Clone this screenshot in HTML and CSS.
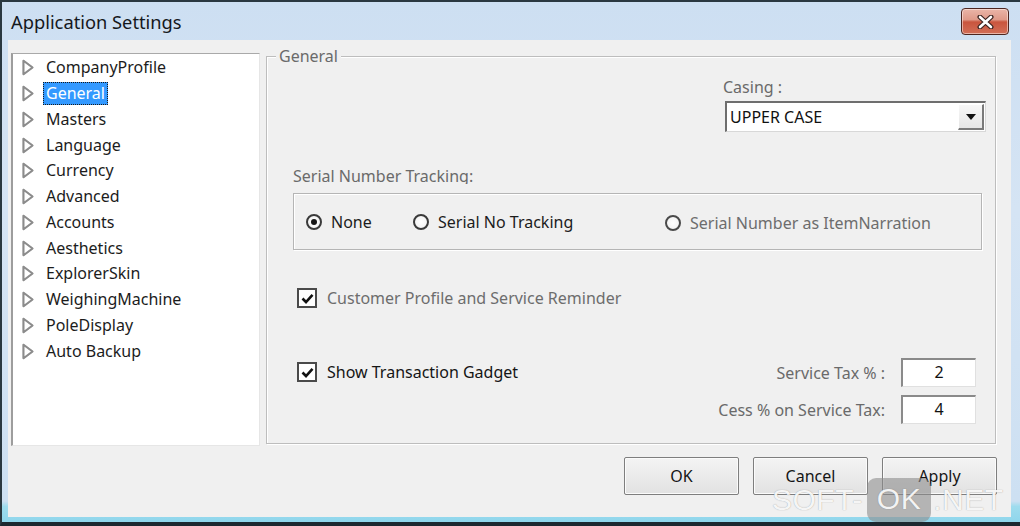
FILE: index.html
```html
<!DOCTYPE html>
<html>
<head>
<meta charset="utf-8">
<title>Application Settings</title>
<link rel="stylesheet" href="styles.css">
</head>
<body>
<div class="window">
  <div class="titlebar">
    <span class="title">Application Settings</span>
    <button class="close" aria-label="Close">
      <svg width="17" height="14" viewBox="0 0 17 14">
        <path d="M3 2 L14 12 M14 2 L3 12" stroke="#3b2320" stroke-width="5" stroke-linecap="round"/>
        <path d="M3 2 L14 12 M14 2 L3 12" stroke="#ffffff" stroke-width="2.6" stroke-linecap="round"/>
      </svg>
    </button>
  </div>
  <div class="client">
    <div class="main">
      <ul class="tree">
        <li><svg class="tri" width="14" height="17" viewBox="0 0 14 17"><path d="M2.5 1.8 L11.5 8.5 L2.5 15.2 Z" fill="#fff" stroke="#8c8c8c" stroke-width="2" stroke-linejoin="round"/></svg><span class="lbl">CompanyProfile</span></li>
        <li><svg class="tri" width="14" height="17" viewBox="0 0 14 17"><path d="M2.5 1.8 L11.5 8.5 L2.5 15.2 Z" fill="#fff" stroke="#8c8c8c" stroke-width="2" stroke-linejoin="round"/></svg><span class="lbl sel">General</span></li>
        <li><svg class="tri" width="14" height="17" viewBox="0 0 14 17"><path d="M2.5 1.8 L11.5 8.5 L2.5 15.2 Z" fill="#fff" stroke="#8c8c8c" stroke-width="2" stroke-linejoin="round"/></svg><span class="lbl">Masters</span></li>
        <li><svg class="tri" width="14" height="17" viewBox="0 0 14 17"><path d="M2.5 1.8 L11.5 8.5 L2.5 15.2 Z" fill="#fff" stroke="#8c8c8c" stroke-width="2" stroke-linejoin="round"/></svg><span class="lbl">Language</span></li>
        <li><svg class="tri" width="14" height="17" viewBox="0 0 14 17"><path d="M2.5 1.8 L11.5 8.5 L2.5 15.2 Z" fill="#fff" stroke="#8c8c8c" stroke-width="2" stroke-linejoin="round"/></svg><span class="lbl">Currency</span></li>
        <li><svg class="tri" width="14" height="17" viewBox="0 0 14 17"><path d="M2.5 1.8 L11.5 8.5 L2.5 15.2 Z" fill="#fff" stroke="#8c8c8c" stroke-width="2" stroke-linejoin="round"/></svg><span class="lbl">Advanced</span></li>
        <li><svg class="tri" width="14" height="17" viewBox="0 0 14 17"><path d="M2.5 1.8 L11.5 8.5 L2.5 15.2 Z" fill="#fff" stroke="#8c8c8c" stroke-width="2" stroke-linejoin="round"/></svg><span class="lbl">Accounts</span></li>
        <li><svg class="tri" width="14" height="17" viewBox="0 0 14 17"><path d="M2.5 1.8 L11.5 8.5 L2.5 15.2 Z" fill="#fff" stroke="#8c8c8c" stroke-width="2" stroke-linejoin="round"/></svg><span class="lbl">Aesthetics</span></li>
        <li><svg class="tri" width="14" height="17" viewBox="0 0 14 17"><path d="M2.5 1.8 L11.5 8.5 L2.5 15.2 Z" fill="#fff" stroke="#8c8c8c" stroke-width="2" stroke-linejoin="round"/></svg><span class="lbl">ExplorerSkin</span></li>
        <li><svg class="tri" width="14" height="17" viewBox="0 0 14 17"><path d="M2.5 1.8 L11.5 8.5 L2.5 15.2 Z" fill="#fff" stroke="#8c8c8c" stroke-width="2" stroke-linejoin="round"/></svg><span class="lbl">WeighingMachine</span></li>
        <li><svg class="tri" width="14" height="17" viewBox="0 0 14 17"><path d="M2.5 1.8 L11.5 8.5 L2.5 15.2 Z" fill="#fff" stroke="#8c8c8c" stroke-width="2" stroke-linejoin="round"/></svg><span class="lbl">PoleDisplay</span></li>
        <li><svg class="tri" width="14" height="17" viewBox="0 0 14 17"><path d="M2.5 1.8 L11.5 8.5 L2.5 15.2 Z" fill="#fff" stroke="#8c8c8c" stroke-width="2" stroke-linejoin="round"/></svg><span class="lbl">Auto Backup</span></li>
      </ul>
      <div class="group">
        <span class="legend">General</span>
        <div class="casing">
          <div class="casing-label">Casing :</div>
          <div class="combo">
            <span class="combo-text">UPPER CASE</span>
            <span class="combo-btn"><svg width="10" height="6" viewBox="0 0 10 6"><path d="M0 0 H10 L5 6 Z" fill="#111"/></svg></span>
          </div>
        </div>
        <div class="serial-label">Serial Number Tracking:</div>
        <div class="radio-box">
          <div class="radio r1"><span class="dot on"></span><span>None</span></div>
          <div class="radio r2"><span class="dot"></span><span>Serial No Tracking</span></div>
          <div class="radio r3 disabled"><span class="dot"></span><span>Serial Number as ItemNarration</span></div>
        </div>
        <div class="check disabled first-check">
          <span class="box"><svg width="13" height="11" viewBox="0 0 13 11"><path d="M1.5 5.5 L5 9 L11.5 1.8" fill="none" stroke="#111" stroke-width="2.6"/></svg></span>
          <span>Customer Profile and Service Reminder</span>
        </div>
        <div class="bottom-row">
          <div class="check gadget">
            <span class="box"><svg width="13" height="11" viewBox="0 0 13 11"><path d="M1.5 5.5 L5 9 L11.5 1.8" fill="none" stroke="#111" stroke-width="2.6"/></svg></span>
            <span>Show Transaction Gadget</span>
          </div>
          <div class="tax">
            <div class="tax-row"><span class="tax-label">Service Tax % :</span><span class="num">2</span></div>
            <div class="tax-row"><span class="tax-label">Cess % on Service Tax:</span><span class="num">4</span></div>
          </div>
        </div>
      </div>
    </div>
    <div class="buttons">
      <button class="btn">OK</button>
      <button class="btn">Cancel</button>
      <button class="btn">Apply</button>
    </div>
  </div>
  <div class="watermark"><span class="wm-soft">SOFT-</span><span class="wm-ok">OK</span><span class="wm-net">.NET</span></div>
</div>
</body>
</html>
```

FILE: styles.css
```css
* { box-sizing: border-box; }
html, body { margin: 0; padding: 0; }
body {
  width: 1020px;
  height: 526px;
  overflow: hidden;
  background: #1f2b33;
  font-family: "Noto Sans", "Open Sans", sans-serif;
  font-size: 16px;
  color: #1c1c1c;
}
.window {
  position: relative;
  width: 1020px;
  height: 526px;
  display: flex;
  flex-direction: column;
  border-top: 2px solid #2a3840;
  border-left: 2px solid #2a3840;
  border-bottom: 4px solid #1d2830;
  background: linear-gradient(to bottom, #cddff2 0%, #d5e4f4 40%, #cde0f2 96%, #9fdcee 97%, #8fd6ec 100%);
}
.titlebar {
  height: 38px;
  display: flex;
  justify-content: space-between;
  align-items: flex-start;
  padding: 0 11px 0 9px;
  flex: none;
}
.title {
  font-size: 18.3px;
  line-height: 24px;
  margin-top: 8px;
  color: #15181c;
}
.close {
  margin-top: 6px;
  width: 48px;
  height: 27px;
  border: 1px solid #4d2620;
  border-radius: 4px;
  padding: 0;
  display: flex;
  align-items: center;
  justify-content: center;
  background: linear-gradient(to bottom, #eab5a8 0%, #df9a89 42%, #c9553e 52%, #d26f58 100%);
  box-shadow: inset 0 0 0 1px rgba(255, 240, 235, 0.55);
}
.client {
  flex: 1;
  margin: 0 9px 5px 6px;
  background: #f0f0f0;
  display: flex;
  flex-direction: column;
}
.main {
  display: flex;
  align-items: flex-start;
  padding: 6px 0 0 3px;
  gap: 6px;
}
.tree {
  list-style: none;
  margin: 7px 0 0 0;
  padding: 1px 0 0 8px;
  width: 249px;
  height: 393px;
  background: #ffffff;
  border-top: 1px solid #a9a9a9;
  border-left: 2px solid #9d9d9d;
  border-right: 1px solid #e6e6e6;
  border-bottom: 1px solid #e6e6e6;
}
.tree li {
  height: 25.75px;
  display: flex;
  align-items: center;
}
.tri { flex: none; margin-right: 8px; filter: drop-shadow(0.5px 0.5px 0.5px rgba(0,0,0,0.25)); }
.lbl {
  padding: 0 3px;
  line-height: 23px;
  white-space: nowrap;
}
.lbl.sel {
  background: #3399ff;
  color: #ffffff;
  outline: 1px dotted #1a1a1a;
  outline-offset: -1px;
}
.group {
  position: relative;
  margin-top: 10px;
  width: 730px;
  height: 388px;
  border: 1px solid #bdbdbd;
  box-shadow: inset 1px 1px 0 #ffffff, 1px 1px 0 #ffffff;
  display: flex;
  flex-direction: column;
}
.legend {
  position: absolute;
  top: -11px;
  left: 9px;
  padding: 0 3px;
  line-height: 20px;
  background: #f0f0f0;
  color: #6a6a6a;
}
.casing {
  align-self: flex-end;
  width: 263px;
  margin: 20px 9px 0 0;
}
.casing-label {
  line-height: 20px;
  color: #6a6a6a;
}
.combo {
  margin: 4px 0 0 2px;
  height: 31px;
  display: flex;
  align-items: stretch;
  background: #ffffff;
  border-top: 2px solid #6e6e6e;
  border-left: 2px solid #6e6e6e;
  border-right: 1px solid #d8d8d8;
  border-bottom: 1px solid #d8d8d8;
}
.combo-text {
  flex: 1;
  padding-left: 3px;
  line-height: 28px;
  color: #111;
}
.combo-btn {
  width: 26px;
  margin: 1px 1px 1px 0;
  display: flex;
  align-items: center;
  justify-content: center;
  background: linear-gradient(#f7f7f7, #e6e6e6);
  border-right: 2px solid #7a7a7a;
  border-bottom: 2px solid #7a7a7a;
  border-top: 1px solid #ffffff;
  border-left: 1px solid #ffffff;
}
.serial-label {
  margin: 34px 0 0 26px;
  height: 18px;
  line-height: 20px;
  overflow: hidden;
  color: #6a6a6a;
}
.radio-box {
  margin: 9px 13px 0 26px;
  height: 57px;
  border: 1px solid #b5b5b5;
  box-shadow: inset 1px 1px 0 #ffffff, 1px 1px 0 #ffffff;
  display: flex;
  align-items: center;
  padding: 1px 0 0 12px;
}
.radio {
  display: flex;
  align-items: center;
  gap: 9px;
  white-space: nowrap;
}
.r1 { width: 107px; }
.r2 { width: 252px; }
.r3 { margin-top: 2px; }
.dot {
  width: 16px;
  height: 16px;
  border-radius: 50%;
  border: 2px solid #3a3a3a;
  background: radial-gradient(circle, #ffffff 0%, #f0f0f0 100%);
  display: flex;
  align-items: center;
  justify-content: center;
  flex: none;
}
.dot.on::after {
  content: "";
  width: 6px;
  height: 6px;
  border-radius: 50%;
  background: #151515;
}
.disabled { color: #6d6d6d; }
.disabled .dot { border-color: #4a4a4a; }
.check {
  display: flex;
  align-items: center;
  gap: 10px;
  white-space: nowrap;
  line-height: 20px;
}
.first-check { margin: 38px 0 0 30px; }
.box {
  width: 20px;
  height: 20px;
  border: 2px solid #4a4a4a;
  background: #ffffff;
  display: flex;
  align-items: center;
  justify-content: center;
  flex: none;
}
.bottom-row {
  display: flex;
  justify-content: space-between;
  align-items: flex-start;
  margin: 50px 19px 0 30px;
}
.gadget { margin-top: 4px; color: #151515; }
.tax {
  display: flex;
  flex-direction: column;
  gap: 8px;
}
.tax-row {
  display: flex;
  align-items: center;
  justify-content: flex-end;
  gap: 16px;
}
.tax-label { color: #6a6a6a; line-height: 20px; }
.num {
  width: 75px;
  height: 29px;
  background: #ffffff;
  border-top: 2px solid #8a8a8a;
  border-left: 2px solid #8a8a8a;
  border-right: 1px solid #e0e0e0;
  border-bottom: 1px solid #e0e0e0;
  text-align: center;
  line-height: 25px;
  color: #111;
}
.buttons {
  display: flex;
  justify-content: flex-end;
  gap: 14px;
  padding: 0 14px 0 0;
  margin-top: 11px;
}
.btn {
  width: 115px;
  height: 38px;
  font-family: "Noto Sans", "Open Sans", sans-serif;
  font-size: 16px;
  color: #151515;
  border: 1px solid #7e7e7e;
  border-radius: 2px;
  background: linear-gradient(to bottom, #f4f4f4 0%, #ebebeb 50%, #e2e2e2 100%);
  box-shadow: inset 0 0 0 1px #fbfbfb;
  padding: 0;
}
.watermark {
  position: absolute;
  left: 770px;
  top: 476px;
  display: flex;
  align-items: center;
  font-family: "Liberation Sans", Arial, sans-serif;
  font-size: 30px;
  line-height: 34px;
  color: rgba(255, 255, 255, 0.92);
  text-shadow: 0 0 1px rgba(90, 90, 90, 0.6);
  letter-spacing: 0.5px;
}
.wm-ok {
  margin-left: 4px;
  padding: 4px 10px 6px;
  border-radius: 9px;
  background: rgba(140, 140, 140, 0.6);
  color: rgba(255, 255, 255, 0.92);
}
.wm-net { margin-left: 2px; }
```
